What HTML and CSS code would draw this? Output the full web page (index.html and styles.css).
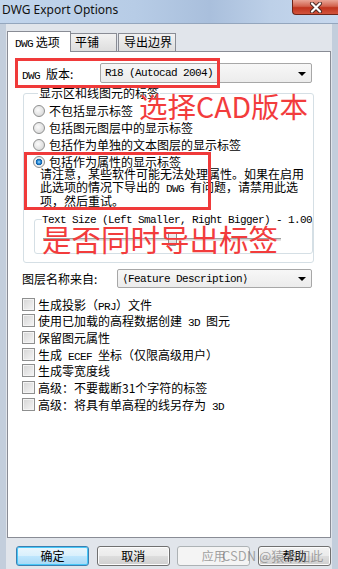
FILE: index.html
```html
<!DOCTYPE html>
<html lang="zh-CN">
<head>
    <meta charset="UTF-8">
    <meta name="viewport" content="width=device-width, initial-scale=1.0">
    <title>DWG Export Options</title>
    <link rel="stylesheet" href="styles.css">
</head>
<body>

    <div class="window">
        <div class="titlebar">
            <span class="title">DWG Export Options</span>
            <span class="close">
                <svg width="16" height="11" viewBox="0 0 16 11">
                    <path d="M4 1.5 L12 9.5 M12 1.5 L4 9.5" stroke="#4a2a25" stroke-width="4" stroke-linecap="round"/>
                    <path d="M4 1.5 L12 9.5 M12 1.5 L4 9.5" stroke="#fff" stroke-width="2.2" stroke-linecap="round"/>
                </svg>
            </span>
        </div>

        <div class="client">
            <div class="tabs">
                <div class="tab active"><span class="mono">DWG</span> 选项</div>
                <div class="tab tab-tile">平铺</div>
                <div class="tab tab-bounds">导出边界</div>
            </div>

            <div class="panel">
                <div class="row version-row">
                    <span class="row-label version-label"><span class="mono">DWG </span>版本:</span>
                    <div class="combo version-combo">
                        <span class="mono">R18 (Autocad 2004)</span>
                        <span class="arrow"></span>
                    </div>
                </div>

                <fieldset class="group">
                    <legend>显示区和线图元的标签</legend>
                    <label class="radio-row"><span class="radio"></span><span>不包括显示标签</span></label>
                    <label class="radio-row"><span class="radio"></span><span>包括图元图层中的显示标签</span></label>
                    <label class="radio-row"><span class="radio"></span><span>包括作为单独的文本图层的显示标签</span></label>
                    <label class="radio-row"><span class="radio checked"></span><span>包括作为属性的显示标签</span></label>
                    <p class="note">
                        请注意，某些软件可能无法处理属性。如果在启用<br>
                        此选项的情况下导出的<span class="mono"> DWG </span>有问题，请禁用此选<br>
                        项，然后重试。
                    </p>
                    <fieldset class="slider-group">
                        <legend class="mono">Text Size (Left Smaller, Right Bigger) - 1.00</legend>
                        <div class="track"><span class="thumb"></span></div>
                    </fieldset>
                </fieldset>

                <div class="row layer-row">
                    <span class="row-label layer-label">图层名称来自:</span>
                    <div class="combo layer-combo">
                        <span class="mono">⟨Feature Description⟩</span>
                        <span class="arrow"></span>
                    </div>
                </div>

                <ul class="checks">
                    <li><span class="check"></span><span>生成投影（<span class="mono">PRJ</span>）文件</span></li>
                    <li><span class="check"></span><span>使用已加载的高程数据创建<span class="mono"> 3D </span>图元</span></li>
                    <li><span class="check"></span><span>保留图元属性</span></li>
                    <li><span class="check"></span><span>生成<span class="mono"> ECEF </span>坐标（仅限高级用户）</span></li>
                    <li><span class="check"></span><span>生成零宽度线</span></li>
                    <li><span class="check"></span><span>高级：不要截断31个字符的标签</span></li>
                    <li><span class="check"></span><span>高级：将具有单高程的线另存为<span class="mono"> 3D</span></span></li>
                </ul>

                <!-- red annotations drawn over the dialog -->
                <div class="mark mark-version"></div>
                <div class="mark mark-attr"></div>
                <div class="note-red note-version">选择CAD版本</div>
                <div class="note-red note-labels">是否同时导出标签</div>
            </div>

            <div class="buttons">
                <button class="btn default">确定</button>
                <button class="btn">取消</button>
                <button class="btn" disabled>应用</button>
                <button class="btn">帮助</button>
            </div>
        </div>

        <div class="watermark">CSDN @猿来如此</div>
    </div>

</body>
</html>
```

FILE: styles.css
```css
* {
    box-sizing: border-box;
}
body {
    margin: 0;
    width: 338px;
    height: 569px;
    overflow: hidden;
    font-family: "Noto Sans CJK SC", sans-serif;
    font-size: 12px;
    color: #000;
}
.mono {
    font-family: "Liberation Mono", "DejaVu Sans Mono", monospace;
    font-size: 11px;
    letter-spacing: -0.6px;
}
.window {
    position: relative;
    width: 338px;
    height: 569px;
    display: flex;
    flex-direction: column;
    background: #c3cedc;
}
.titlebar {
    height: 24px;
    display: flex;
    align-items: flex-start;
    background: linear-gradient(90deg, #c2d5ec 0%, #b7cce6 40%, #a9bfdc 62%, #bdd0e8 80%, #c7d8ee 100%);
    border-bottom: 1px solid #94a6bd;
}
.title {
    font-family: "Noto Sans", sans-serif;
    font-size: 12px;
    line-height: 16px;
    padding: 2px 0 0 2px;
    color: #111;
}
.close {
    margin-left: auto;
    width: 46px;
    height: 15px;
    display: flex;
    align-items: center;
    justify-content: center;
    background: linear-gradient(#e9a596 0%, #d2624e 45%, #c0331d 55%, #d2543d 100%);
    border: 1px solid #6e2418;
    border-top: none;
    border-right: none;
    border-radius: 0 0 0 4px;
}
.client {
    flex: 1;
    display: flex;
    flex-direction: column;
    padding: 7px 1px 0 1px;
    background: #e1e5eb;
    border-left: 6px solid #c3cedc;
    border-right: 6px solid #c3cedc;
}
.tabs {
    display: flex;
    height: 20px;
    align-items: flex-end;
}
.tab {
    height: 18px;
    line-height: 16px;
    border: 1px solid #898c95;
    border-bottom: none;
    background: linear-gradient(#f2f2f2, #dedede);
    padding-left: 4px;
    margin-left: -1px;
}
.tab.active {
    height: 21px;
    margin-bottom: -1px;
    margin-left: 0;
    width: 64px;
    padding-left: 7px;
    line-height: 19px;
    background: #fff;
    position: relative;
    z-index: 1;
}
.tab-tile {
    width: 47px;
}
.tab-bounds {
    width: 58px;
    margin-left: 1px;
    padding-left: 5px;
}
.panel {
    position: relative;
    height: 487px;
    background: #fff;
    border: 1px solid #898c95;
}
.row {
    display: flex;
    align-items: center;
    padding-left: 14px;
    height: 20px;
}
.version-row {
    margin-top: 11px;
}
.version-label {
    width: 78px;
}
.combo {
    position: relative;
    height: 20px;
    display: flex;
    align-items: center;
    padding-left: 4px;
    border: 1px solid #a7a7a7;
    border-radius: 2px;
    background: linear-gradient(#f7f7f7, #ececec);
}
.version-combo {
    width: 212px;
}
.arrow {
    position: absolute;
    right: 5px;
    top: 8px;
    border-left: 4px solid transparent;
    border-right: 4px solid transparent;
    border-top: 4px solid #000;
}
.group {
    margin: 1px 0 0 15px;
    width: 289px;
    height: 179px;
    padding: 0 0 0 9px;
    border: 1px solid #d5dfe5;
    border-radius: 3px;
}
.group > legend {
    margin-left: 5px;
    padding: 0 1px;
    line-height: 18px;
}
.radio-row {
    display: flex;
    align-items: center;
    height: 17px;
    gap: 4px;
}
.radio {
    width: 12px;
    height: 12px;
    border-radius: 50%;
    border: 1px solid #8e8f8f;
    background: radial-gradient(circle at 40% 40%, #fbfbfb 0, #e6e6e6 50%, #cfcfcf 100%);
}
.radio.checked {
    background: radial-gradient(circle, #a8dcff 0, #2e8fd8 1.6px, #0b5aa4 3px, #f4f4f4 3.6px, #dcdcdc 100%);
}
.note {
    margin: -2px 0 0 7px;
    line-height: 12.5px;
    white-space: nowrap;
}
.slider-group {
    margin: 6px 0 0 1px;
    width: 266px;
    height: 40px;
    padding: 0;
    border: 1px solid #d5dfe5;
    border-radius: 3px;
}
.slider-group legend {
    margin-left: 7px;
    padding: 0;
    line-height: 12px;
    white-space: nowrap;
}
.track {
    position: relative;
    margin: 12px 0 0 8px;
    width: 238px;
    height: 3px;
    border-top: 1px solid #a0a0a0;
    border-bottom: 1px solid #e6e6e6;
    background: #d6d6d6;
}
.thumb {
    position: absolute;
    left: 125px;
    top: -7px;
    width: 9px;
    height: 14px;
    border: 1px solid #8e8f8f;
    border-radius: 2px;
    background: linear-gradient(#f5f5f5, #d9d9d9);
}
.layer-row {
    margin-top: 6px;
    height: 19px;
}
.layer-label {
    width: 95px;
}
.layer-combo {
    width: 195px;
    height: 19px;
}
.layer-combo .arrow {
    top: 7px;
}
.checks {
    list-style: none;
    margin: 8px 0 0;
    padding: 0 0 0 14px;
}
.checks li {
    display: flex;
    align-items: center;
    height: 16.67px;
    white-space: nowrap;
}
.check {
    width: 13px;
    height: 13px;
    margin-right: 3px;
    border: 1px solid #8e8f8f;
    background: linear-gradient(135deg, #d5d5d5, #f6f6f6);
    box-shadow: inset 0 0 0 1px #f4f4f4;
}
.mark {
    position: absolute;
    border: 3px solid #f03a3a;
}
.mark-version {
    left: 7px;
    top: 6px;
    width: 205px;
    height: 30px;
}
.mark-attr {
    left: 16px;
    top: 100px;
    width: 187px;
    height: 58px;
}
.note-red {
    position: absolute;
    color: #f23c3c;
    line-height: 1;
    white-space: nowrap;
}
.note-version {
    left: 131px;
    top: 40px;
    font-size: 28.5px;
}
.note-labels {
    left: 34px;
    top: 172px;
    font-size: 29.5px;
}
.buttons {
    display: flex;
    justify-content: space-between;
    margin: 8px 0 0 9px;
}
.btn {
    width: 73px;
    height: 20px;
    padding: 0;
    font-family: "Noto Sans CJK SC", sans-serif;
    font-size: 12px;
    line-height: 16px;
    color: #000;
    border: 1px solid #707070;
    border-radius: 3px;
    background: linear-gradient(#f2f2f2 0%, #ebebeb 48%, #dddddd 52%, #cfcfcf 100%);
    box-shadow: inset 0 0 0 1px #fcfcfc;
}
.btn.default {
    border-color: #3c7fb1;
    background: linear-gradient(#eaf6fd 0%, #d9f0fc 48%, #bee6fd 52%, #a7d9f5 100%);
    box-shadow: inset 0 0 0 1px #48c8f8;
}
.btn:disabled {
    color: #a0a0a0;
    border-color: #adb2b5;
    background: #f4f4f4;
    box-shadow: none;
}
.watermark {
    position: absolute;
    left: 222px;
    top: 547px;
    font-family: "Noto Sans CJK SC", sans-serif;
    font-size: 13px;
    line-height: 18px;
    color: rgba(110, 110, 110, 0.6);
    white-space: nowrap;
}
```
